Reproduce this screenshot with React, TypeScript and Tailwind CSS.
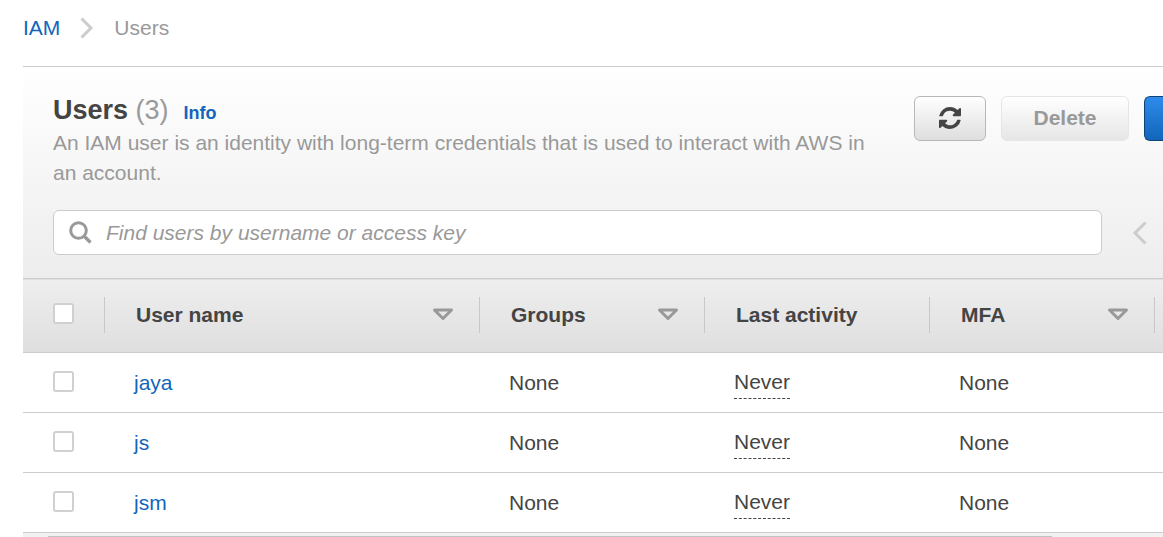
import React from 'react';

type User = { name: string; groups: string; lastActivity: string; mfa: string };

const users: User[] = [
  { name: 'jaya', groups: 'None', lastActivity: 'Never', mfa: 'None' },
  { name: 'js', groups: 'None', lastActivity: 'Never', mfa: 'None' },
  { name: 'jsm', groups: 'None', lastActivity: 'Never', mfa: 'None' },
];

const columns = [
  { label: 'User name', sortable: true, width: '' },
  { label: 'Groups', sortable: true, width: 'w-[225px]' },
  { label: 'Last activity', sortable: false, width: 'w-[225px]' },
  { label: 'MFA', sortable: true, width: 'w-[225px]' },
];

function Checkbox({ label }: { label: string }) {
  return (
    <input
      type="checkbox"
      aria-label={label}
      className="block size-[21px] appearance-none rounded-[3px] border-2 border-[#d0d0d0] bg-white checked:bg-[#146eb4]"
    />
  );
}

function RefreshIcon() {
  return (
    <svg width="22" height="22" viewBox="128 128 1536 1536" fill="currentColor" aria-hidden="true">
      <path d="M1639 1056q0 5-1 7-64 268-268 434.5t-478 166.5q-146 0-282.5-55t-243.5-157l-129 129q-19 19-45 19t-45-19-19-45v-448q0-26 19-45t45-19h448q26 0 45 19t19 45-19 45l-137 137q71 66 161 102t187 36q134 0 250-65t186-179q11-17 53-117 8-23 30-23h192q13 0 22.5 9.5t9.5 22.5zm25-800v448q0 26-19 45t-45 19h-448q-26 0-45-19t-19-45 19-45l138-138q-148-137-349-137-134 0-250 65t-186 179q-11 17-53 117-8 23-30 23h-199q-13 0-22.5-9.5t-9.5-22.5v-7q65-268 270-434.5t480-166.5q146 0 284 55.5t245 156.5l130-129q19-19 45-19t45 19 19 45z" />
    </svg>
  );
}

function SortIcon() {
  return (
    <svg width="22" height="13" viewBox="0 0 22 13" fill="none" stroke="#999" strokeWidth="3" strokeLinejoin="round" aria-hidden="true">
      <path d="M2.5 2H19.5L11 10.5Z" />
    </svg>
  );
}

function Header() {
  return (
    <header className="pt-7 pl-[30px]">
      <div className="flex items-start gap-[30px]">
        <div className="min-w-0 flex-1">
          <div className="flex items-baseline leading-[30px]">
            <h1 className="text-[27px] font-bold text-[#444]">
              Users <span className="font-normal text-[#999]">(3)</span>
            </h1>
            <a href="#info" className="ml-[15px] text-[18px] font-bold text-[#1166bb]">
              Info
            </a>
          </div>
          <p className="leading-[30px] text-[#999]">
            An IAM user is an identity with long-term credentials that is used to interact with AWS in an account.
          </p>
        </div>
        <div className="flex shrink-0 gap-[15px] pt-px">
          <button
            type="button"
            aria-label="Refresh"
            className="flex h-[45px] w-[72px] items-center justify-center rounded-md border border-[#b8b8b8] bg-linear-to-b from-white to-[#dedede] pb-px text-[#444]"
          >
            <RefreshIcon />
          </button>
          <button
            type="button"
            disabled
            className="h-[45px] min-w-32 rounded-md border border-[#e6e6e6] bg-linear-to-b from-white to-[#e6e6e6] px-[30px] pb-[2px] font-bold text-[#999]"
          >
            Delete
          </button>
          <button
            type="button"
            aria-label="Add users"
            className="h-[45px] w-[19px] rounded-l-md border border-r-0 border-[#0f4377] bg-linear-to-b from-[#2e8bec] to-[#1166bb]"
          />
        </div>
      </div>
      <div className="flex items-center pt-[22px] pb-[23px]">
        <label className="flex h-[45px] min-w-0 flex-1 items-center gap-[14px] rounded-md border border-[#ccc] bg-white px-[15px]">
          <svg width="23" height="23" viewBox="0 0 23 23" fill="none" stroke="#999" aria-hidden="true">
            <circle cx="9.5" cy="9.5" r="7.8" strokeWidth="3" />
            <path d="M15 15L21.5 21.5" strokeWidth="3.4" />
          </svg>
          <input
            type="search"
            aria-label="Find users"
            placeholder="Find users by username or access key"
            className="min-w-0 flex-1 bg-transparent italic outline-none placeholder:text-[#999]"
          />
        </label>
        <button type="button" aria-label="Previous page" className="mr-4 ml-[30px]">
          <svg width="15" height="24" viewBox="0 0 15 24" fill="none" stroke="#ccc" strokeWidth="3" aria-hidden="true">
            <path d="M13.5 1.5L3 12L13.5 22.5" />
          </svg>
        </button>
      </div>
    </header>
  );
}

function UsersTable() {
  return (
    <table className="w-full table-fixed border-collapse text-left text-[#444]">
      <thead className="border-y border-[#ccc] bg-linear-to-b from-[#eee] to-[#dfdfdf]">
        <tr className="h-[74px]">
          <th className="w-[82px] p-0 pb-[2px]">
            <div className="flex h-9 items-center border-r border-[#c8c8c8] pb-[2px] pl-[30px]">
              <Checkbox label="Select all users" />
            </div>
          </th>
          {columns.map((column) => (
            <th key={column.label} className={`p-0 pb-[2px] font-bold ${column.width}`}>
              <div className="flex h-9 items-center justify-between border-r border-[#c8c8c8] pr-[25px] pl-[31px]">
                <span>{column.label}</span>
                {column.sortable && (
                  <button type="button" aria-label={`Sort by ${column.label}`}>
                    <SortIcon />
                  </button>
                )}
              </div>
            </th>
          ))}
          <th className="w-2 p-0" />
        </tr>
      </thead>
      <tbody>
        {users.map((user) => (
          <tr key={user.name} className="h-[60px] border-b border-[#ccc]">
            <td className="p-0 pb-[2px] pl-[30px]">
              <Checkbox label={`Select ${user.name}`} />
            </td>
            <td className="p-0 pl-[29px]">
              <a href={`#${user.name}`} className="text-[#1166bb]">
                {user.name}
              </a>
            </td>
            <td className="p-0 pl-[29px]">{user.groups}</td>
            <td className="p-0 pl-[29px]">
              <span className="inline-block border-b border-dashed border-[#444] align-middle leading-8">{user.lastActivity}</span>
            </td>
            <td className="p-0 pl-[29px]">{user.mfa}</td>
            <td className="p-0" />
          </tr>
        ))}
      </tbody>
    </table>
  );
}

export default function App() {
  return (
    <div className="overflow-hidden bg-white pl-[23px] font-['Liberation_Sans',Arial,sans-serif] text-[21px] leading-[30px]">
      <nav aria-label="Breadcrumb" className="flex h-[66px] items-start pt-[13px]">
        <a href="#iam" className="text-[#1166bb]">
          IAM
        </a>
        <svg className="mt-1 ml-5" width="14" height="22" viewBox="0 0 14 22" fill="none" stroke="#ccc" strokeWidth="3" aria-hidden="true">
          <path d="M1.5 1.5L11 11L1.5 20.5" />
        </svg>
        <span className="ml-5 text-[#999]">Users</span>
      </nav>
      <main className="border-t border-[#ccc]">
        <div className="bg-linear-to-b from-white to-[#ededed]">
          <Header />
        </div>
        <UsersTable />
        <div className="h-1 bg-[#f1f1f1] pt-[3px] pl-[25px]">
          <div className="h-px w-[90%] bg-[#c1c1c1]" />
        </div>
      </main>
    </div>
  );
}
